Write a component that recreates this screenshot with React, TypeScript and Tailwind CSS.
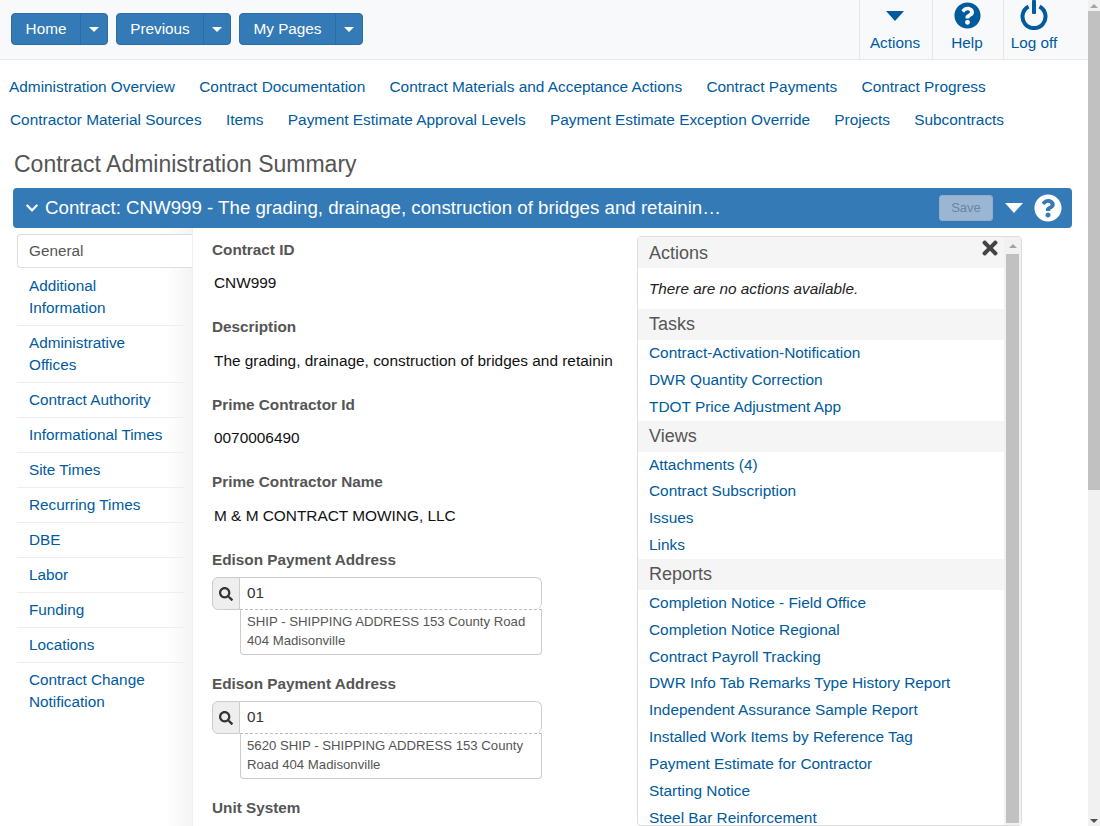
import React from "react";
import { FaQuestionCircle, FaSearch, FaTimes, FaChevronDown } from "react-icons/fa";

const Split = ({ label, w }: { label: string; w: string }) => (
  <div className={`flex h-[32px] rounded-[4px] bg-[#337ab7] border border-[#2e6da4] text-white text-[15.3px] ${w}`}>
    <div className="flex-1 flex items-center justify-center">{label}</div>
    <div className="w-[27px] border-l border-[#2e6da4] flex items-center justify-center">
      <div className="w-0 h-0 border-x-[5px] border-x-transparent border-t-[5px] border-t-white" />
    </div>
  </div>
);

const TopAction = ({ icon, label, w }: { icon: React.ReactNode; label: string; w: string }) => (
  <div className={`h-[59px] border-l border-[#e7e7e7] pr-[2px] flex flex-col items-center ${w}`}>
    <div className="h-[34px] w-full flex items-center justify-center">{icon}</div>
    <div className="text-[15.3px] leading-[20px] mt-[-1px] text-[#005a9e] whitespace-nowrap">{label}</div>
  </div>
);

const row1 = ["Administration Overview", "Contract Documentation", "Contract Materials and Acceptance Actions", "Contract Payments", "Contract Progress"];
const row2 = ["Contractor Material Sources", "Items", "Payment Estimate Approval Levels", "Payment Estimate Exception Override", "Projects", "Subcontracts"];

const side: [string, string?][] = [
  ["Additional", "Information"],
  ["Administrative", "Offices"],
  ["Contract Authority"],
  ["Informational Times"],
  ["Site Times"],
  ["Recurring Times"],
  ["DBE"],
  ["Labor"],
  ["Funding"],
  ["Locations"],
  ["Contract Change", "Notification"],
];

const Label = ({ children, cls }: { children: React.ReactNode; cls: string }) => (
  <div className={`text-[15.3px] leading-[20px] font-bold text-[#555] ${cls}`}>{children}</div>
);
const Value = ({ children, cls }: { children: React.ReactNode; cls: string }) => (
  <div className={`text-[15.4px] leading-[20px] text-[#111] pl-[2px] whitespace-nowrap ${cls}`}>{children}</div>
);

const Lookup = ({ l1, l2 }: { l1: string; l2: string }) => (
  <div className="w-[330px] mt-[7px]">
    <div className="flex h-[32px]">
      <div className="w-[28px] h-[33px] bg-[#eee] border border-[#ccc] rounded-l-[6px] flex items-center justify-center text-[#333]">
        <FaSearch className="w-[14px] h-[14px]" />
      </div>
      <div className="flex-1 border border-l-0 border-b-0 border-[#ccc] rounded-r-[6px] bg-white text-[15.3px] text-[#333] pl-[7px] flex items-center">01</div>
    </div>
    <div className="ml-[28px] border border-[#ccc] border-t-[#bbb] [border-top-style:dashed] rounded-b-[4px] h-[46px] px-[6px] pt-[2px] text-[13.2px] leading-[19px] text-[#555]">
      <div className="whitespace-nowrap">{l1}</div>
      <div className="whitespace-nowrap">{l2}</div>
    </div>
  </div>
);

const SecHead = ({ children, cls }: { children: React.ReactNode; cls?: string }) => (
  <div className={`h-[31px] bg-[#f5f5f5] pl-[11px] text-[18px] text-[#555] ${cls ?? "leading-[30px]"}`}>{children}</div>
);

const PanelLinks = ({ items }: { items: string[] }) => (
  <div className="pl-[11px]">
    {items.map((t) => (
      <div key={t} className="h-[26.85px] leading-[26.85px] text-[15.4px] text-[#005a9e] whitespace-nowrap">{t}</div>
    ))}
  </div>
);

export default function App() {
  return (
    <div className="h-[826px] w-[1100px] overflow-hidden flex bg-white font-['Liberation_Sans',Arial,sans-serif]">
      <div className="w-[1088px] h-full overflow-hidden">
        {/* top bar */}
        <div className="h-[60px] bg-[#f8f9fb] border-b border-[#e7e7e7] flex justify-between">
          <div className="flex gap-[8px] pl-[11px] pt-[13px]">
            <Split label="Home" w="w-[97px]" />
            <Split label="Previous" w="w-[115px]" />
            <Split label="My Pages" w="w-[124px]" />
          </div>
          <div className="flex pr-[22px]">
            <TopAction
              w="w-[73px]"
              label="Actions"
              icon={<div className="w-0 h-0 mt-[-3px] border-x-[9px] border-x-transparent border-t-[10px] border-t-[#005a9e]" />}
            />
            <TopAction w="w-[71px]" label="Help" icon={<FaQuestionCircle className="w-[27px] h-[27px] mt-[-4px] text-[#005a9e]" />} />
            <TopAction
              w="w-[63px]"
              label="Log off"
              icon={
                <svg width="28" height="30" viewBox="0 0 28 30" className="mt-[-5px]">
                  <path d="M8.5 6.5 A11.5 11.5 0 1 0 19.5 6.5" fill="none" stroke="#005a9e" strokeWidth="4" strokeLinecap="butt" />
                  <rect x="12" y="0" width="4" height="14" rx="1" fill="#005a9e" />
                </svg>
              }
            />
          </div>
        </div>

        {/* links */}
        <div className="h-[33px] pl-[9px] flex items-center gap-[24.3px] pt-[1px] text-[15.4px] text-[#005a9e] whitespace-nowrap mt-[10px]">
          {row1.map((t) => <span key={t}>{t}</span>)}
        </div>
        <div className="h-[33px] pl-[10px] flex items-center gap-[24.3px] text-[15.4px] text-[#005a9e] whitespace-nowrap">
          {row2.map((t) => <span key={t}>{t}</span>)}
        </div>

        <div className="ml-[14px] mt-[10px] h-[36px] text-[23px] leading-[36px] text-[#555]">Contract Administration Summary</div>

        {/* blue bar */}
        <div className="ml-[13px] mt-[6px] w-[1059px] h-[40px] bg-[#337ab7] rounded-[4px] flex items-center text-white pl-[12px] pr-[10px]">
          <FaChevronDown className="w-[14px] h-[14px] shrink-0" />
          <span className="text-[18.7px] ml-[6px] flex-1 whitespace-nowrap">Contract: CNW999 - The grading, drainage, construction of bridges and retainin…</span>
          <div className="w-[54px] h-[26px] rounded-[3px] bg-[#9bb6d3] border border-[#8fadcd] text-[#6a84a3] text-[13px] flex items-center justify-center">Save</div>
          <div className="ml-[12px] w-0 h-0 border-x-[9px] border-x-transparent border-t-[10px] border-t-white" />
          <FaQuestionCircle className="ml-[11px] w-[28px] h-[28px]" />
        </div>

        {/* body */}
        <div className="flex">
          {/* sidebar */}
          <div className="ml-[17px] w-[175px] shrink-0 pt-[6px] h-[600px] bg-gradient-to-r from-white via-white via-85% to-[#f4f4f4]">
            <div className="h-[34px] border border-r-0 border-[#ddd] rounded-l-[4px] pl-[11px] text-[15.3px] leading-[32px] text-[#555] bg-white">General</div>
            <div className="pr-[8px] pt-[1px]">
              {side.map(([a, b]) => (
                <div key={a} className={`pl-[12px] text-[15.3px] leading-[22px] text-[#005a9e] border-b border-[#eee] last:border-b-0 py-[6px] ${b ? "h-[57px]" : "h-[35px]"}`}>
                  <div>{a}</div>
                  {b && <div>{b}</div>}
                </div>
              ))}
            </div>
          </div>

          {/* form */}
          <div className="w-[445px] shrink-0 border-l border-[#eee] pl-[19px] pt-[12px]">
            <Label cls="">Contract ID</Label>
            <Value cls="mt-[13px]">CNW999</Value>
            <Label cls="mt-[24px]">Description</Label>
            <Value cls="mt-[14px]">The grading, drainage, construction of bridges and retainin</Value>
            <Label cls="mt-[24px]">Prime Contractor Id</Label>
            <Value cls="mt-[13px]">0070006490</Value>
            <Label cls="mt-[24px]">Prime Contractor Name</Label>
            <Value cls="mt-[14px]">M &amp; M CONTRACT MOWING, LLC</Value>
            <Label cls="mt-[24px]">Edison Payment Address</Label>
            <Lookup l1="SHIP - SHIPPING ADDRESS 153 County Road" l2="404 Madisonville" />
            <Label cls="mt-[19px]">Edison Payment Address</Label>
            <Lookup l1="5620 SHIP - SHIPPING ADDRESS 153 County" l2="Road 404 Madisonville" />
            <Label cls="mt-[19px]">Unit System</Label>
          </div>

          {/* right panel */}
          <div className="w-[385px] h-[590px] mt-[8px] border border-[#ddd] rounded-[4px] flex relative shrink-0">
            <div className="flex-1 min-w-0">
              <SecHead cls="leading-[33px]">Actions</SecHead>
              <div className="pl-[11px] h-[41px] pt-[11px] text-[15.3px] italic leading-[20px] text-[#222]">There are no actions available.</div>
              <SecHead>Tasks</SecHead>
              <PanelLinks items={["Contract-Activation-Notification", "DWR Quantity Correction", "TDOT Price Adjustment App"]} />
              <SecHead>Views</SecHead>
              <PanelLinks items={["Attachments (4)", "Contract Subscription", "Issues", "Links"]} />
              <SecHead>Reports</SecHead>
              <PanelLinks items={["Completion Notice - Field Office", "Completion Notice Regional", "Contract Payroll Tracking", "DWR Info Tab Remarks Type History Report", "Independent Assurance Sample Report", "Installed Work Items by Reference Tag", "Payment Estimate for Contractor", "Starting Notice", "Steel Bar Reinforcement"]} />
            </div>
            <div className="w-[17px] bg-[#f1f1f1] px-[2px] pb-[2px] shrink-0 flex flex-col">
              <div className="h-[17px] flex items-center justify-center">
                <div className="w-0 h-0 border-x-[4px] border-x-transparent border-b-[4px] border-b-[#a3a3a3]" />
              </div>
              <div className="flex-1 bg-[#c1c1c1]" />
            </div>
            <FaTimes className="absolute right-[20px] top-[0px] w-[22px] h-[22px] text-[#444]" />
          </div>
        </div>
      </div>

      {/* page scrollbar */}
      <div className="w-[12px] h-full bg-[#f1f1f1] flex flex-col">
        <div className="h-[11px] flex items-center justify-center">
          <div className="w-0 h-0 border-x-[4px] border-x-transparent border-b-[4px] border-b-[#a3a3a3]" />
        </div>
        <div className="h-[479px] bg-[#c1c1c1]" />
        <div className="flex-1" />
        <div className="h-[11px] flex items-center justify-center">
          <div className="w-0 h-0 border-x-[4px] border-x-transparent border-t-[4px] border-t-[#505050]" />
        </div>
      </div>
    </div>
  );
}
